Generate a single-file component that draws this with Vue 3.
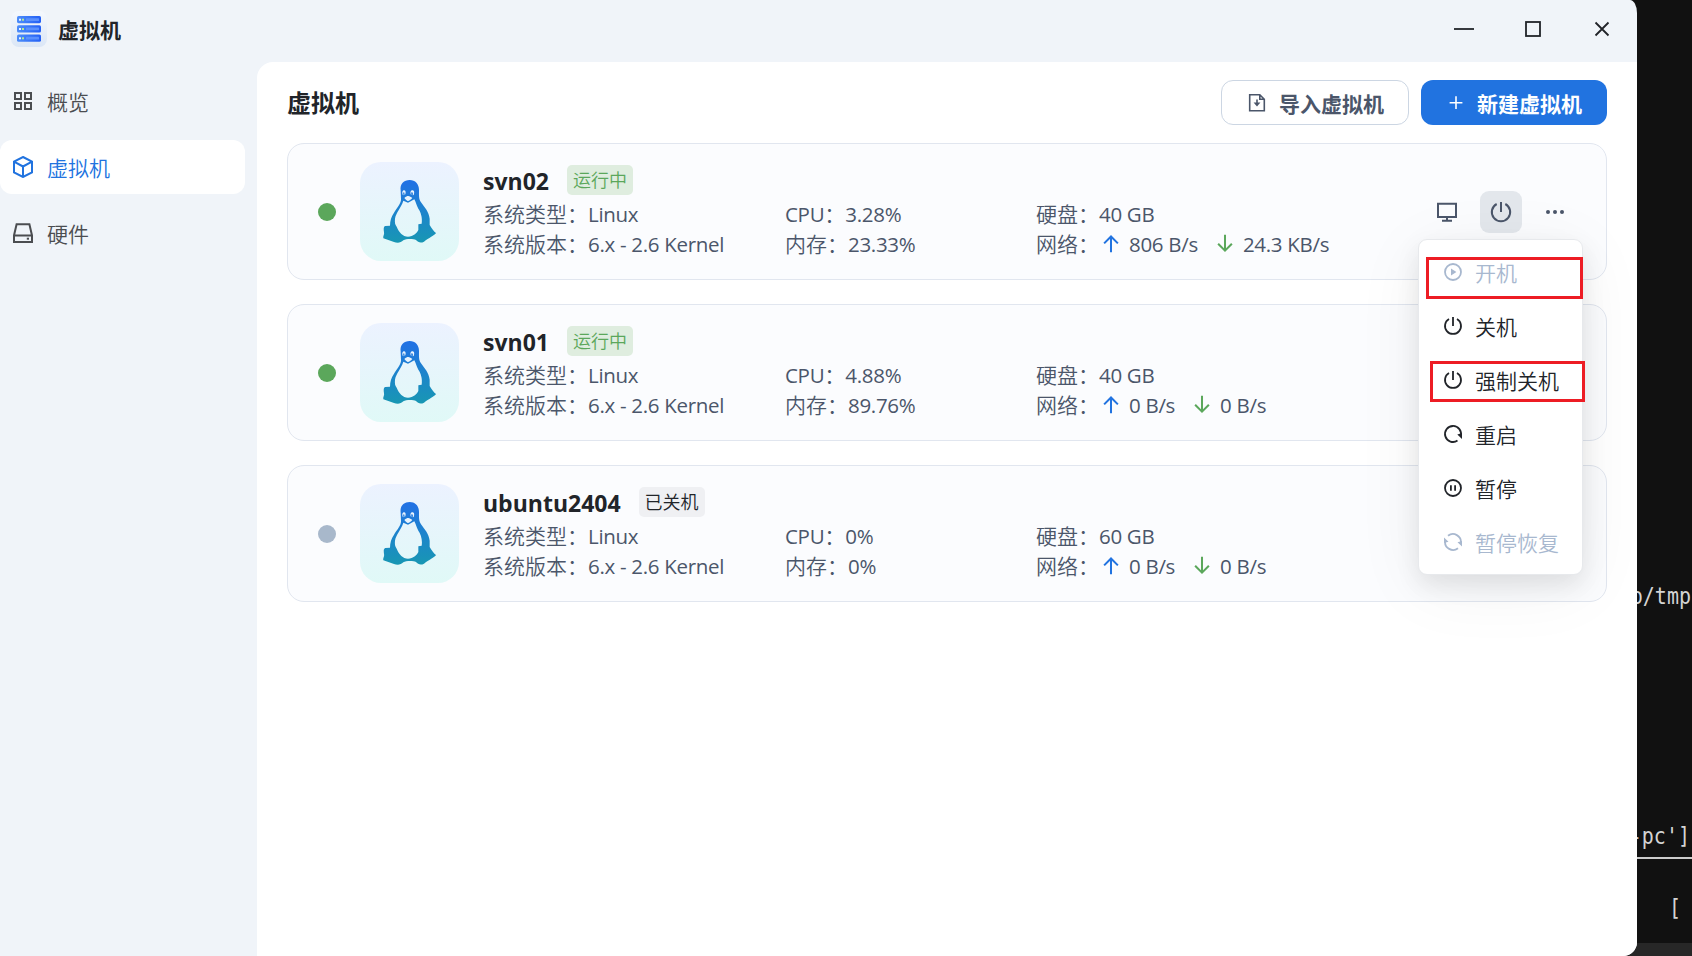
<script setup>
const nav = [
  { key: 'grid', label: '概览' },
  { key: 'cube', label: '虚拟机', active: true },
  { key: 'disk', label: '硬件' },
]

const machines = [
  { name: 'svn02', running: true, cpu: '3.28%', mem: '23.33%', disk: '40 GB', up: '806 B/s', down: '24.3 KB/s' },
  { name: 'svn01', running: true, cpu: '4.88%', mem: '89.76%', disk: '40 GB', up: '0 B/s', down: '0 B/s' },
  { name: 'ubuntu2404', running: false, cpu: '0%', mem: '0%', disk: '60 GB', up: '0 B/s', down: '0 B/s' },
]

const menu = [
  { icon: 'play', label: '开机', disabled: true, mark: 'first' },
  { icon: 'power', label: '关机' },
  { icon: 'power', label: '强制关机', mark: 'second' },
  { icon: 'restart', label: '重启' },
  { icon: 'pause', label: '暂停' },
  { icon: 'resume', label: '暂停恢复', disabled: true },
]
</script>

<template>
  <div class="desktop">
    <div class="window">
      <header class="titlebar">
        <svg class="logo" viewBox="0 0 36 36">
          <defs>
            <linearGradient id="logoBg" x1="0" y1="0" x2="0" y2="1">
              <stop offset="0" stop-color="#f5f8fd" /><stop offset="1" stop-color="#dbe6f6" />
            </linearGradient>
            <linearGradient id="logoBar" x1="0" y1="0" x2="1" y2="0">
              <stop offset="0" stop-color="#4d8dfa" /><stop offset="1" stop-color="#2460f5" />
            </linearGradient>
          </defs>
          <rect width="36" height="36" rx="8" fill="url(#logoBg)" />
          <g v-for="y in [5, 14.3, 23.6]" :key="y">
            <rect x="6" :y="y" width="24" height="7.2" rx="1.6" fill="url(#logoBar)" />
            <rect x="8" :y="y + 2.7" width="2" height="2" fill="#e8f4ff" />
            <rect x="11" :y="y + 2.7" width="2" height="2" fill="#b5e890" />
            <rect x="15" :y="y + 2.2" width="13" height="2.8" rx="0.5" fill="#5a90fd" />
          </g>
        </svg>
        <span class="app-name">虚拟机</span>
        <div class="controls">
          <svg viewBox="0 0 20 20"><path d="M0 10H20" /></svg>
          <svg viewBox="0 0 20 20"><rect x="3" y="3" width="14" height="14" /></svg>
          <svg viewBox="0 0 20 20"><path d="M3.5 3.5L16.5 16.5M16.5 3.5L3.5 16.5" /></svg>
        </div>
      </header>

      <div class="body">
        <nav class="sidebar">
          <div v-for="n in nav" :key="n.key" class="nav-item" :class="{ active: n.active }">
            <svg v-if="n.key === 'grid'" viewBox="0 0 22 22">
              <path d="M3 2.9h6v6H3zM13 2.9h6v6h-6zM3 12.9h6v6H3zM13 12.9h6v6h-6z" />
            </svg>
            <svg v-else-if="n.key === 'cube'" viewBox="0 0 22 22">
              <path d="M11 1L20 5.7V16.3L11 21L2 16.3V5.7ZM2 5.7L11 10.5L20 5.7M11 10.5V21" />
            </svg>
            <svg v-else viewBox="0 0 22 22">
              <path d="M4.6 2.2H17.4L20 13.4V20H2V13.4ZM2 13.4H20" /><path d="M14.8 16.7H17" />
            </svg>
            <span>{{ n.label }}</span>
          </div>
        </nav>

        <main class="content">
          <div class="toolbar">
            <h1>虚拟机</h1>
            <button class="btn outline">
              <svg viewBox="0 0 18 20">
                <path d="M1.7 1.8H11.8L16.3 6.3V17.8H1.7ZM11.8 1.8V6.3H16.3" />
                <path d="M9 6.5V11" /><path class="solid" d="M5.6 9.6H12.4L9 13.4Z" />
              </svg>
              <span>导入虚拟机</span>
            </button>
            <button class="btn primary">
              <svg viewBox="0 0 18 20"><path d="M2.6 9.7H15.4M9 3.3V16.1" /></svg>
              <span>新建虚拟机</span>
            </button>
          </div>

          <section v-for="(m, i) in machines" :key="m.name" class="card">
            <i class="dot" :class="{ on: m.running }"></i>
            <div class="tile">
              <svg viewBox="30 36 297 297">
                <defs>
                  <linearGradient :id="'tux' + i" x1="0" y1="0" x2="0" y2="1">
                    <stop offset="0.05" stop-color="#2172e3" /><stop offset="1" stop-color="#1897b3" />
                  </linearGradient>
                </defs>
                <path
                  :fill="'url(#tux' + i + ')'"
                  fill-rule="evenodd"
                  d="M152 122C149 101 162 90 179 90C196 90 207 102 207 120C207 138 206 146 213 157C225 174 236 184 239 206L239 225C245 236 252 245 258 249C254 256 236 264 222 275C212 280 204 277 198 270C190 266 168 266 160 271C152 280 140 279 132 276L100 265C98 258 104 254 102 246C101 238 100 230 106 228L120 227C120 212 124 199 132 188C140 174 154 160 153 147ZM160 152C153 174 138 188 135 206C134 218 135 223 140 230C148 249 158 259 174 260C190 259 200 250 205 240L205 223L215 221C218 202 212 186 205 176C199 165 198 157 193 148L174 158Z"
                />
                <g fill="#e9f3fd">
                  <path d="M158 134C155 126 158 121 162 121C167 121 168 127 166 133L163 134C164 129 163 126 161 127C159 128 159 132 161 136Z" />
                  <path d="M182 133C180 126 182 121 187 121C193 121 194 128 191 135L188 136C190 130 188 126 185 127C183 128 183 131 185 134Z" />
                  <path d="M163 144C168 140 171 138 175 138C179 138 183 141 187 144C182 149 178 153 174 153C170 153 168 149 163 144Z" />
                </g>
              </svg>
            </div>
            <div class="info">
              <div class="name-row">
                <strong>{{ m.name }}</strong>
                <span class="badge" :class="{ on: m.running }">{{ m.running ? '运行中' : '已关机' }}</span>
              </div>
              <div class="grid">
                <div class="cell">系统类型：<b>Linux</b></div>
                <div class="cell"><b>CPU</b>：<b>{{ m.cpu }}</b></div>
                <div class="cell">硬盘：<b>{{ m.disk }}</b></div>
                <div class="cell">系统版本：<b>6.x - 2.6 Kernel</b></div>
                <div class="cell">内存：<b>{{ m.mem }}</b></div>
                <div class="cell">
                  网络：
                  <svg class="arrow up" viewBox="0 0 24 24"><path d="M12 21V4M4.5 11.3L12 3.8L19.5 11.3" /></svg>
                  <b class="rate">{{ m.up }}</b>
                  <svg class="arrow down" viewBox="0 0 24 24"><path d="M12 2V19M4.5 11.7L12 19.2L19.5 11.7" /></svg>
                  <b>{{ m.down }}</b>
                </div>
              </div>
            </div>

            <div v-if="i === 0" class="actions">
              <span class="action">
                <svg viewBox="0 0 24 24"><path d="M3 3.8H21V17H3ZM12 17V20.6M7 20.8H17" /></svg>
              </span>
              <span class="action pressed">
                <svg viewBox="0 0 24 24"><path d="M7.7 4A9.2 9.2 0 1 0 16.3 4M12 2V12" /></svg>
              </span>
              <span class="action">
                <svg class="more" viewBox="0 0 24 24"><circle cx="5" cy="12" r="2" /><circle cx="12" cy="12" r="2" /><circle cx="19" cy="12" r="2" /></svg>
              </span>
              <div class="menu">
                <div v-for="item in menu" :key="item.label" class="menu-item" :class="{ disabled: item.disabled }">
                  <svg viewBox="0 0 20 20">
                    <template v-if="item.icon === 'play'">
                      <circle cx="10" cy="10" r="8" /><path class="solid" d="M8 6.5L13.4 10L8 13.5Z" />
                    </template>
                    <path v-else-if="item.icon === 'power'" d="M6 3A8 8 0 1 0 14 3M10 1V10" />
                    <template v-else-if="item.icon === 'restart'">
                      <path d="M14.5 16.6A8 8 0 1 1 17.7 12.2" /><path class="solid" d="M14.3 10.5L19 9V15Z" />
                    </template>
                    <template v-else-if="item.icon === 'pause'">
                      <circle cx="10" cy="10" r="8" /><path d="M7.9 7.2V12.8M12.1 7.2V12.8" />
                    </template>
                    <template v-else>
                      <path d="M5 3.8A8 8 0 0 1 17.9 11M15 16.2A8 8 0 0 1 2.1 9" />
                      <path class="solid" d="M14.5 10.3L19 9V14.5ZM5.5 9.7L1 11V5.5Z" />
                    </template>
                  </svg>
                  <span>{{ item.label }}</span>
                  <i v-if="item.mark" class="mark" :class="item.mark"></i>
                </div>
              </div>
            </div>
          </section>
        </main>
      </div>
    </div>

    <aside class="terminal">
      <pre class="line tmp">p/tmp</pre>
      <pre class="line host">-pc']</pre>
      <div class="rule"></div>
      <pre class="line bracket">[</pre>
      <div class="strip"></div>
    </aside>
  </div>
</template>

<style>
body { background: #111; overflow: hidden; }
</style>

<style scoped>
* { box-sizing: border-box; }
.desktop {
  display: flex; width: 1692px; height: 956px; overflow: hidden; background: #111;
  font-family: "Open Sans", "Noto Sans CJK SC", sans-serif; font-size: 21px; color: #212429;
}
svg { flex: none; fill: none; stroke: currentColor; }
.solid { fill: currentColor; stroke: none; }
.window {
  position: relative; z-index: 1; display: flex; flex-direction: column; flex: none;
  width: 1637px; height: 956px; overflow: hidden; border-radius: 0 7px 14px 0 / 0 13px 14px 0; background: #f0f4f9;
}
.titlebar { display: flex; align-items: center; height: 62px; flex: none; padding: 0 28px 4px 11px; }
.logo { width: 36px; height: 36px; stroke: none; }
.app-name { margin: 1px 0 0 11px; font-weight: 700; line-height: 30px; }
.controls { display: flex; gap: 49px; margin-left: auto; margin-right: -8px; padding-right: 5px; }
.controls svg { width: 20px; height: 20px; stroke-width: 1.8; }
.body { display: flex; flex: 1; min-height: 0; }
.sidebar { width: 257px; padding: 12px 12px 0 0; display: flex; flex-direction: column; gap: 12px; }
.nav-item {
  display: flex; align-items: center; gap: 13px; height: 54px; padding-left: 12px;
  border-radius: 12px; color: #4b4d51; font-weight: 350;
}
.nav-item svg { width: 22px; height: 22px; stroke-width: 2; }
.nav-item span { line-height: 30px; padding-top: 1px; }
.nav-item.active { background: #fff; color: #2173df; }
.content { flex: 1; min-width: 0; padding: 18px 30px 0; border-top-left-radius: 16px; background: #fff; }
.toolbar { display: flex; align-items: center; gap: 12px; height: 45px; margin-bottom: 18px; }
h1 { margin: 0 auto 0 0; font-size: 24px; line-height: 36px; font-weight: 700; }
.btn {
  display: flex; align-items: center; width: 186px; height: 45px; padding: 0; border: 0;
  border-radius: 12px; font: inherit; font-weight: 700; white-space: nowrap;
}
.btn svg { width: 18px; height: 20px; stroke-width: 1.6; }
.outline { width: 188px; padding-left: 26px; border: 1px solid #ccd6e3; background: #fff; color: #4b566a; }
.outline svg { margin-right: 13px; }
.primary { padding-left: 26px; background: #2173e0; color: #fff; }
.primary svg { margin-right: 12px; }
.card {
  position: relative; display: flex; align-items: center; height: 137px; margin-bottom: 24px;
  padding-left: 30px; border: 1px solid #e1e6ef; border-radius: 17px; background: #fbfcfe;
}
.dot { width: 18px; height: 18px; margin-right: 24px; border-radius: 50%; background: #a8b8cb; }
.dot.on { background: #5ba75b; }
.tile { width: 99px; height: 99px; border-radius: 21px; background: linear-gradient(#ecf2ff, #e0f9f7); }
.tile svg { display: block; width: 99px; height: 99px; stroke: none; }
.info { margin-left: 24px; height: 135px; padding-top: 19px; }
.name-row { display: flex; align-items: center; height: 36px; gap: 18px; }
strong { font-size: 23px; line-height: 34px; font-weight: 700; }
.badge {
  width: 66px; height: 30px; margin-top: -3px; border-radius: 5px; background: #eff0f3;
  font-size: 18px; line-height: 30px; font-weight: 350; text-align: center;
}
.badge.on { background: #dfeddf; color: #5ba75b; }
.grid { display: grid; grid-template-columns: 302px 251px 400px; grid-auto-rows: 30px; color: #4b566a; }
.cell { display: flex; align-items: center; line-height: 30px; font-weight: 350; white-space: nowrap; }
.cell b { font-size: 20.5px; font-weight: 400; letter-spacing: -0.3px; }
.arrow { width: 22px; height: 22px; stroke-width: 2.2; margin-top: -1px; }
.arrow.up { color: #2173e0; margin-left: 1px; margin-right: 7px; }
.arrow.down { color: #5ba75b; margin-right: 7px; }
.rate { margin-right: 16px; }
.actions { position: absolute; top: 47px; right: 30px; display: flex; gap: 12px; z-index: 3; }
.action { display: flex; align-items: center; justify-content: center; width: 42px; height: 42px; border-radius: 9px; color: #4b566a; }
.action.pressed { background: #e3e7ec; }
.action svg { width: 24px; height: 24px; stroke-width: 2; }
.action .more { fill: currentColor; stroke: none; }
.menu {
  position: absolute; top: 48px; right: -7px; width: 165px; height: 336px; padding: 5px 0;
  border: 1px solid #e7e9ec; border-radius: 9px; background: #fff;
  box-shadow: 0 10px 24px rgba(0, 0, 0, 0.09), 0 12px 70px rgba(0, 0, 0, 0.06);
}
.menu-item { position: relative; display: flex; align-items: center; height: 54px; padding-left: 24px; gap: 12px; font-weight: 350; }
.menu-item svg { width: 20px; height: 20px; stroke-width: 1.8; }
.menu-item span { line-height: 30px; padding-top: 1px; white-space: nowrap; }
.menu-item.disabled { color: #a8b8cf; }
.mark { position: absolute; border: 3px solid #ed1c24; }
.mark.first { left: 7px; top: 12px; width: 157px; height: 42px; }
.mark.second { left: 11px; top: 8px; width: 155px; height: 41px; }
.terminal {
  flex: 1; min-width: 0; display: flex; flex-direction: column; background: #111;
  color: #d4d4d4; font-size: 20px; line-height: 24px;
}
.line {
  margin: 0; height: 24px; padding-right: 1px; text-align: right;
  font-family: "DejaVu Sans Mono", monospace; font-size: 20px; transform: scaleY(1.12);
}
.tmp { margin-top: 584px; margin-left: -20px; }
.host { margin-top: 216px; margin-left: -20px; padding-right: 2px; }
.rule { height: 2px; margin-top: 9px; background: #ccc; }
.bracket { margin-top: 37px; padding-right: 11px; }
.strip { height: 13px; margin-top: auto; margin-left: -20px; background: #272727; }
</style>
